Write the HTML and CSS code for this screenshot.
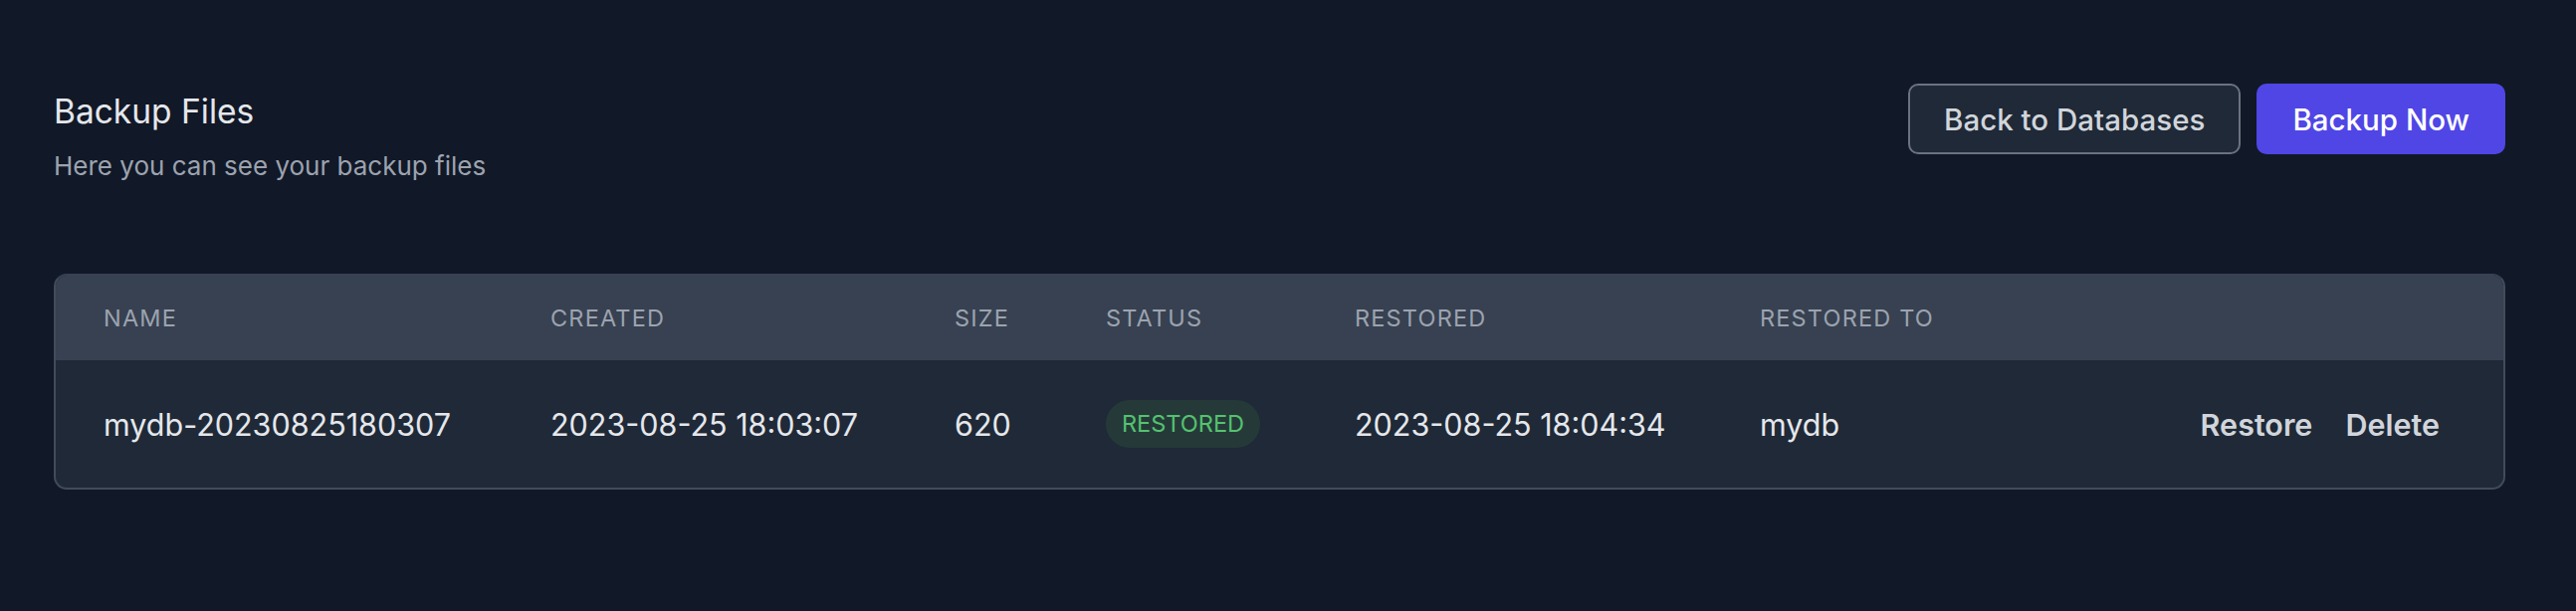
FILE: index.html
```html
<!DOCTYPE html>
<html lang="en">
<head>
<meta charset="utf-8">
<title>Backup Files</title>
<link rel="stylesheet" href="styles.css">
</head>
<body>
<main class="page">
  <header class="page-head">
    <div class="head-text">
      <h1 class="title">Backup Files</h1>
      <p class="subtitle">Here you can see your backup files</p>
    </div>
    <div class="head-actions">
      <button class="btn btn-outline" type="button">Back to Databases</button>
      <button class="btn btn-primary" type="button">Backup Now</button>
    </div>
  </header>

  <div class="card">
    <table class="files">
      <colgroup>
        <col class="c-name">
        <col class="c-created">
        <col class="c-size">
        <col class="c-status">
        <col class="c-restored">
        <col class="c-to">
        <col class="c-actions">
      </colgroup>
      <thead>
        <tr>
          <th>Name</th>
          <th>Created</th>
          <th>Size</th>
          <th>Status</th>
          <th>Restored</th>
          <th>Restored To</th>
          <th class="th-actions"></th>
        </tr>
      </thead>
      <tbody>
        <tr>
          <td>mydb-20230825180307</td>
          <td>2023-08-25 18:03:07</td>
          <td>620</td>
          <td><span class="badge">RESTORED</span></td>
          <td>2023-08-25 18:04:34</td>
          <td>mydb</td>
          <td class="actions"><a class="link">Restore</a><a class="link">Delete</a></td>
        </tr>
      </tbody>
    </table>
  </div>
</main>
</body>
</html>
```

FILE: styles.css
```css
* { box-sizing: border-box; }
html, body { margin: 0; padding: 0; }
body {
  background: #111827;
  font-family: Inter, "Noto Sans", "DejaVu Sans", sans-serif;
  color: #e5e7eb;
  width: 2588px;
  height: 614px;
  overflow: hidden;
}
.page {
  padding: 84px 71px 0 54px;
}
.page-head {
  display: flex;
  justify-content: space-between;
  align-items: flex-start;
}
.head-text { padding-top: 8px; }
.title {
  margin: 0;
  font-size: 33.5px;
  font-weight: 400;
  line-height: 40px;
  color: #e5e7eb;
}
.subtitle {
  margin: 20px 0 0;
  font-size: 26px;
  line-height: 30px;
  color: #9ca3af;
}
.head-actions {
  display: flex;
  gap: 16px;
}
.btn {
  height: 71px;
  padding: 0 34px;
  font-family: inherit;
  font-size: 29.5px;
  font-weight: 500;
  border-radius: 10px;
  border: 2px solid transparent;
  cursor: pointer;
}
.btn-outline {
  background: #1f2937;
  border-color: #6b7280;
  color: #d1d5db;
}
.btn-primary {
  background: #4f46e5;
  color: #ffffff;
}
.card {
  margin-top: 93px;
  border: 2px solid #414b5a;
  border-top-color: #374151;
  border-radius: 13px;
  overflow: hidden;
  background: #1f2937;
}
.files {
  width: 100%;
  border-collapse: collapse;
  table-layout: fixed;
}
.c-name { width: 449px; }
.c-created { width: 406px; }
.c-size { width: 152px; }
.c-status { width: 250px; }
.c-restored { width: 407px; }
.c-to { width: 300px; }
.files thead tr { background: #374151; }
.files th {
  height: 83px;
  padding: 0 0 0 48px;
  text-align: left;
  font-size: 23.5px;
  font-weight: 400;
  letter-spacing: 0.05em;
  text-transform: uppercase;
  color: #9ca3af;
}
.files th.th-actions { height: 85px; }
.files td {
  height: 128px;
  padding: 0 0 0 48px;
  font-size: 30.5px;
  color: #e5e7eb;
  white-space: nowrap;
}
.badge {
  display: inline-block;
  padding: 0 16px;
  line-height: 48px;
  border-radius: 24px;
  background: #253a38;
  color: #54c270;
  font-size: 23.5px;
}
.files td.actions {
  text-align: right;
  padding: 0 64px 0 0;
}
.link {
  font-weight: 600;
  color: #d1d5db;
  cursor: pointer;
}
.link + .link { margin-left: 33px; }
```
